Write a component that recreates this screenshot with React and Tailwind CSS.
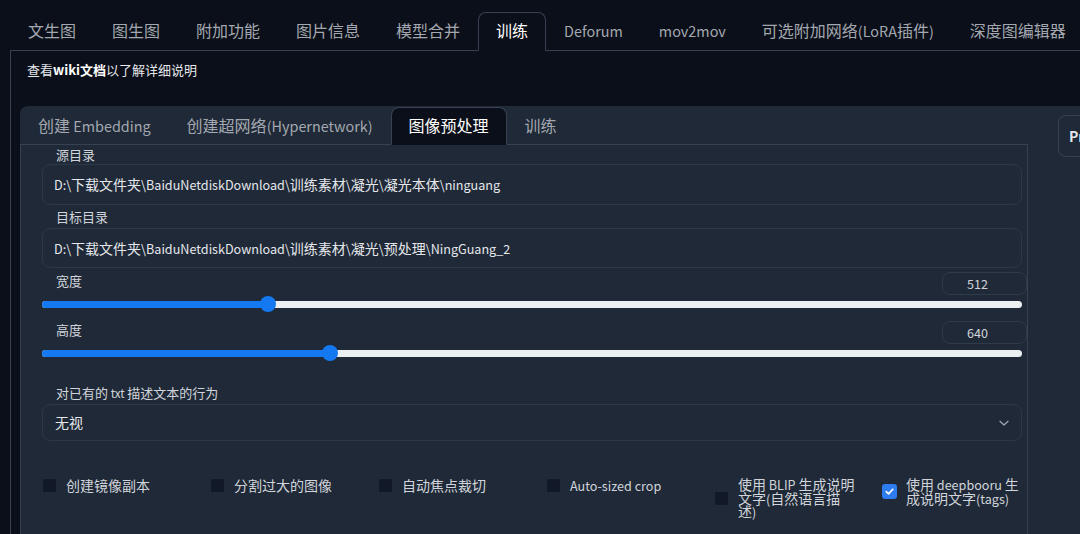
import React from "react";

const topTabs = ["文生图", "图生图", "附加功能", "图片信息", "模型合并", "训练", "Deforum", "mov2mov", "可选附加网络(LoRA插件)", "深度图编辑器"];
const innerTabs = ["创建 Embedding", "创建超网络(Hypernetwork)", "图像预处理", "训练"];

function T({ s }) {
  const parts = s.split(/([\x00-\x7F]+)/).filter((p) => p !== "");
  return (
    <span>
      {parts.map((p, i) =>
        /^[\x00-\x7F]+$/.test(p) ? (
          <span key={i} className="text-[0.9em]">{p}</span>
        ) : (
          <span key={i}>{p}</span>
        )
      )}
    </span>
  );
}

function Slider({ label, value, min, max }) {
  const f = (value - min) / (max - min);
  const pos = "calc(8px + " + f + " * (100% - 16px))";
  return (
    <div>
      <div className="flex items-start justify-between h-[23px]">
        <span className="pl-[14px] leading-[18px] text-[13px] text-[#d1d5db]">{label}</span>
        <div className="-mr-[5px] w-[85px] h-[23px] rounded-lg border border-[#2f3a4b] flex items-center justify-center pr-[14px] text-[14px] text-[#d1d5db]">
          <T s={String(value)} />
        </div>
      </div>
      <div className="relative h-[18px]">
        <div className="absolute left-0 right-0 top-[5.5px] h-[7px] rounded-full bg-[#eceff1]"></div>
        <div className="absolute left-0 top-[5.5px] h-[7px] rounded-full bg-[#1479f0]" style={{ width: pos }}></div>
        <div className="absolute top-[1px] w-[16px] h-[16px] -ml-[8px] rounded-full bg-[#1479f0]" style={{ left: pos }}></div>
      </div>
    </div>
  );
}

function Check({ checked, lines }) {
  return (
    <div className="w-[168px] shrink-0 flex items-center gap-[9px]">
      <div className={"w-[15px] h-[15px] shrink-0 rounded-[3px] flex items-center justify-center " + (checked ? "bg-[#2d7cf0]" : "bg-[#111827] border border-[#1f2a3a]")}>
        {checked && (
          <svg width="11" height="11" viewBox="0 0 12 12" fill="none">
            <path d="M2.5 6.2 L5 8.6 L9.6 3.6" stroke="white" strokeWidth="1.8" strokeLinecap="round" strokeLinejoin="round" />
          </svg>
        )}
      </div>
      <div className="text-[14px] leading-[13.5px] text-[#d1d5db]">
        {lines.map((l, i) => (
          <div key={i}>
            <T s={l} />
          </div>
        ))}
      </div>
    </div>
  );
}

export default function App() {
  return (
    <div className="w-[1080px] h-[534px] overflow-hidden bg-[#0b0f19] text-[#d1d5db]" style={{ fontFamily: '"Noto Sans CJK SC", "Noto Sans", sans-serif' }}>
      <div className="ml-[10px] pt-[12px] flex items-end border-b border-[#374151] whitespace-nowrap">
        {topTabs.map((t, i) => {
          const active = t === "训练" && i === 5;
          return (
            <div
              key={i}
              className={
                "relative -mb-px h-[39px] px-[17px] flex items-center pb-[3px] text-[16px] border rounded-t-lg " +
                (active ? "border-[#374151] border-b-[#0b0f19] bg-[#0b0f19] text-white" : "border-transparent text-[#a3a8b0]")
              }
            >
              <T s={t} />
            </div>
          );
        })}
      </div>
      <div className="ml-[10px] border-l border-[#374151] h-[500px]">
        <div className="pl-[16px] pt-[10px] text-[13px] leading-[18px] text-[#e5e7eb]">
          查看<span className="font-bold text-white">wiki文档</span>以了解详细说明
        </div>
        <div className="ml-[9px] mt-[27px] bg-[#1f2937] rounded-tl-lg flex h-[440px]">
          <div className="w-[1008px] shrink-0">
            <div className="flex items-end h-[38px] whitespace-nowrap">
              {innerTabs.map((t, i) => {
                const active = i === 2;
                return (
                  <div
                    key={i}
                    className={
                      "relative z-10 -mb-px h-[38px] px-[17px] flex items-center pb-[3px] text-[16px] border rounded-t-lg " +
                      (active ? "border-[#374151] border-b-[#0b0f19] bg-[#0b0f19] text-white" : "border-transparent text-[#a3a8b0]")
                    }
                  >
                    <T s={t} />
                  </div>
                );
              })}
            </div>
            <div className="border border-[#374151] h-[400px] pl-[21px] pr-[5px]">
              <div className="mt-[1px] h-[18px] pl-[14px] text-[13px] leading-[18px] text-[#d1d5db]">源目录</div>
              <div className="h-[41px] rounded-lg border border-[#2c3748] flex items-center pl-[11px] text-[14px] text-[#e5e7eb] whitespace-nowrap">
                <T s={"D:\\下载文件夹\\BaiduNetdiskDownload\\训练素材\\凝光\\凝光本体\\ninguang"} />
              </div>
              <div className="mt-[3px] h-[18px] pl-[14px] text-[13px] leading-[18px] text-[#d1d5db]">目标目录</div>
              <div className="mt-[2px] h-[40px] rounded-lg border border-[#2c3748] flex items-center pl-[11px] text-[14px] text-[#e5e7eb] whitespace-nowrap">
                <T s={"D:\\下载文件夹\\BaiduNetdiskDownload\\训练素材\\凝光\\预处理\\NingGuang_2"} />
              </div>
              <div className="mt-[4px]">
                <Slider label="宽度" value={512} min={64} max={2048} />
              </div>
              <div className="mt-[8px]">
                <Slider label="高度" value={640} min={64} max={2048} />
              </div>
              <div className="mt-[22px] h-[18px] pl-[14px] text-[13px] leading-[18px] text-[#d1d5db]">
                <T s="对已有的 txt 描述文本的行为" />
              </div>
              <div className="mt-[2px] h-[37px] rounded-lg border border-[#2c3748] flex items-center justify-between pl-[12px] pr-[11px] text-[14px] text-[#e5e7eb]">
                <span>无视</span>
                <svg width="12" height="12" viewBox="0 0 12 12" fill="none">
                  <path d="M2 4.2 L6 8 L10 4.2" stroke="#9ca3af" strokeWidth="1.3" strokeLinecap="round" strokeLinejoin="round" />
                </svg>
              </div>
              <div className="mt-[37px] flex items-start whitespace-nowrap">
                <Check lines={["创建镜像副本"]} />
                <Check lines={["分割过大的图像"]} />
                <Check lines={["自动焦点裁切"]} />
                <Check lines={["Auto-sized crop"]} />
                <Check lines={["使用 BLIP 生成说明", "文字(自然语言描", "述)"]} />
                <Check checked lines={["使用 deepbooru 生", "成说明文字(tags)"]} />
              </div>
            </div>
          </div>
          <div className="ml-[30px] pt-[9px] shrink-0">
            <div className="h-[42px] px-[10px] rounded-lg border border-[#374151] flex items-center text-[14px] font-semibold text-[#e5e7eb] whitespace-nowrap">
              Preprocess
            </div>
          </div>
        </div>
      </div>
    </div>
  );
}
